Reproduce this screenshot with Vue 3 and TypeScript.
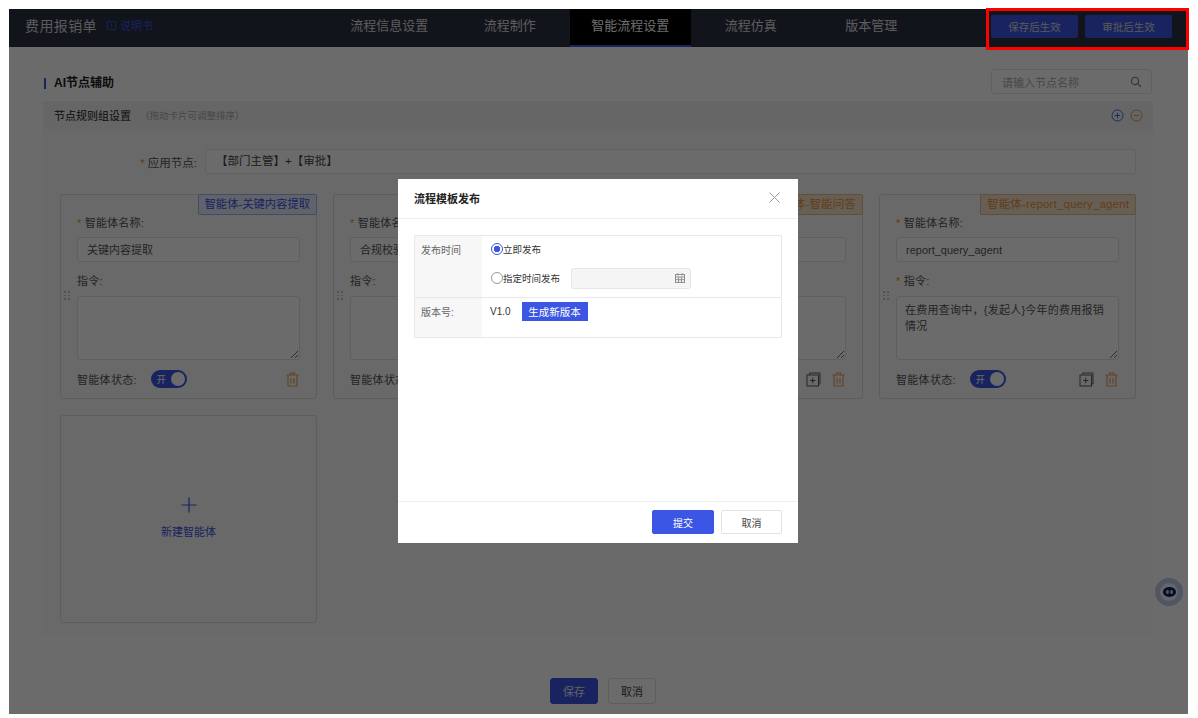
<script setup lang="ts">
type Agent = {
  id: string
  tag: string
  tone: 'blue' | 'orange'
  name: string
  prompt: string
  required: boolean
  copyable: boolean
}

const tabs = ['流程信息设置', '流程制作', '智能流程设置', '流程仿真', '版本管理']
const activeTab = '智能流程设置'

const agents: Agent[] = [
  { id: 'a1', tag: '智能体-关键内容提取', tone: 'blue', name: '关键内容提取', prompt: '', required: false, copyable: false },
  { id: 'a2', tag: '智能体-合规校验', tone: 'blue', name: '合规校验', prompt: '', required: false, copyable: true },
  { id: 'a3', tag: '智能体-智能问答', tone: 'orange', name: '智能问答', prompt: '', required: false, copyable: true },
  {
    id: 'a4',
    tag: '智能体-report_query_agent',
    tone: 'orange',
    name: 'report_query_agent',
    prompt: '在费用查询中，{发起人}今年的费用报销情况',
    required: true,
    copyable: true,
  },
]
</script>

<template>
  <div class="app">
    <header class="topbar">
      <div class="brand">
        <span class="brand-title">费用报销单</span>
        <a class="manual">
          <svg width="11" height="11" viewBox="0 0 12 12" fill="none" stroke="currentColor" stroke-width="1">
            <rect x="1.5" y="1.5" width="9" height="9" rx="1" />
            <path d="M6 3.5v3M6 8v.8" />
          </svg>
          说明书
        </a>
      </div>
      <nav class="tabs">
        <span v-for="tab in tabs" :key="tab" class="tab" :class="{ active: tab === activeTab }">{{ tab }}</span>
      </nav>
      <div class="top-actions">
        <button class="top-btn" type="button">保存后生效</button>
        <button class="top-btn" type="button">审批后生效</button>
      </div>
    </header>

    <main class="main">
      <div class="title-row">
        <h2 class="page-title">AI节点辅助</h2>
        <div class="search">
          <span>请输入节点名称</span>
          <svg width="12" height="12" viewBox="0 0 12 12" fill="none" stroke="#8a8a8a" stroke-width="1.3">
            <circle cx="5" cy="5" r="3.6" />
            <path d="M7.8 7.8l3 3" />
          </svg>
        </div>
      </div>

      <section class="group">
        <div class="group-head">
          <span class="group-title">节点规则组设置</span>
          <span class="group-hint">（拖动卡片可调整排序）</span>
          <span class="group-icons">
            <svg width="13" height="13" viewBox="0 0 13 13" fill="none" stroke="#4a6bdc" stroke-width="1">
              <circle cx="6.5" cy="6.5" r="5.5" />
              <path d="M6.5 3.8v5.4M3.8 6.5h5.4" />
            </svg>
            <svg width="13" height="13" viewBox="0 0 13 13" fill="none" stroke="#d99a5b" stroke-width="1">
              <circle cx="6.5" cy="6.5" r="5.5" />
              <path d="M3.8 6.5h5.4" />
            </svg>
          </span>
        </div>

        <div class="group-body">
          <div class="node-row">
            <label class="node-label"><i class="star">*</i> 应用节点:</label>
            <div class="node-input">【部门主管】+【审批】</div>
          </div>

          <div class="cards">
            <article v-for="agent in agents" :key="agent.id" class="card">
              <span class="tag" :class="agent.tone">{{ agent.tag }}</span>
              <span class="grip"><i v-for="n in 6" :key="n"></i></span>

              <label class="field-label"><i class="star">*</i> 智能体名称:</label>
              <div class="field-input">{{ agent.name }}</div>

              <label class="field-label second"><i v-if="agent.required" class="star">*</i> 指令:</label>
              <textarea class="field-area" :value="agent.prompt" readonly></textarea>

              <div class="card-foot">
                <span class="state-label">智能体状态:</span>
                <span class="switch"><em>开</em><b></b></span>
                <span class="card-icons">
                  <svg v-if="agent.copyable" width="15" height="15" viewBox="0 0 15 15" fill="none" stroke="#5b5b5b" stroke-width="1">
                    <path d="M3.5 2.5v-1.5h10.5v11h-1.5" />
                    <rect x="1" y="3" width="11.5" height="11" />
                    <path d="M6.7 5.8v5.4M4 8.5h5.4" />
                  </svg>
                  <svg width="13" height="15" viewBox="0 0 13 15" fill="none" stroke="#e8a25e" stroke-width="1.2">
                    <path d="M0.5 3h12M4.5 3V1h4v2" />
                    <path d="M2 3v11h9V3" />
                    <path d="M5 6v5.5M8 6v5.5" />
                  </svg>
                </span>
              </div>
            </article>

            <div class="card add-card">
              <svg width="16" height="16" viewBox="0 0 16 16" fill="none" stroke="#3b55e4" stroke-width="1.2">
                <path d="M8 .5v15M.5 8h15" />
              </svg>
              <span>新建智能体</span>
            </div>
          </div>
        </div>
      </section>

      <div class="page-foot">
        <button class="btn primary" type="button">保存</button>
        <button class="btn" type="button">取消</button>
      </div>
    </main>

    <div class="float-eye">
      <span class="eye"><i></i><i></i></span>
    </div>

    <div class="mask"></div>

    <div class="dialog">
      <div class="dialog-head">
        <span>流程模板发布</span>
        <svg width="11" height="11" viewBox="0 0 11 11" fill="none" stroke="#9a9a9a" stroke-width="1">
          <path d="M.5.5l10 10M10.5.5l-10 10" />
        </svg>
      </div>

      <div class="dialog-body">
        <div class="form-table">
          <div class="form-label">发布时间</div>
          <div class="form-cell">
            <div class="radio-row">
              <span class="radio on"></span>
              <span>立即发布</span>
            </div>
            <div class="radio-row">
              <span class="radio"></span>
              <span>指定时间发布</span>
              <span class="date-input">
                <svg width="10" height="10" viewBox="0 0 10 10" fill="none" stroke="#8f8f8f" stroke-width="1">
                  <rect x=".5" y="1.5" width="9" height="8" />
                  <path d="M.5 4h9M3 .2v2.4M7 .2v2.4M3.5 4v5.5M6.5 4v5.5M.5 6.7h9" />
                </svg>
              </span>
            </div>
          </div>
          <div class="form-label second">版本号:</div>
          <div class="form-cell second version">
            <span>V1.0</span>
            <button class="gen-btn" type="button">生成新版本</button>
          </div>
        </div>
      </div>

      <div class="dialog-foot">
        <button class="dlg-btn primary" type="button">提交</button>
        <button class="dlg-btn" type="button">取消</button>
      </div>
    </div>

    <div class="highlight"></div>
  </div>
</template>

<style>
html,
body {
  margin: 0;
  background: #fff;
}
</style>

<style scoped>
.app {
  position: relative;
  box-sizing: border-box;
  display: flex;
  flex-direction: column;
  width: 1179px;
  height: 705px;
  margin: 9px 0 0 9px;
  background: #fff;
  color: #333;
  font-family: "Liberation Sans", "Noto Sans CJK SC", sans-serif;
  font-size: 11px;
  overflow: visible;
}

button {
  font-family: inherit;
  cursor: pointer;
}

.topbar {
  display: flex;
  flex: none;
  align-items: stretch;
  height: 38px;
  background: #2b3042;
}

.brand {
  display: flex;
  flex: none;
  align-items: center;
  gap: 9px;
  box-sizing: border-box;
  width: 320px;
  padding: 0 0 6px 16px;
}

.brand-title {
  color: #d8d8d8;
  font-size: 14px;
  letter-spacing: 0.4px;
}

.manual {
  display: flex;
  align-items: center;
  gap: 3px;
  color: #3b55e4;
  font-size: 11px;
}

.tabs {
  display: flex;
}

.tab {
  display: flex;
  align-items: center;
  justify-content: center;
  box-sizing: border-box;
  width: 120.5px;
  padding-bottom: 8px;
  color: #dcdcdc;
  font-size: 13px;
}

.tab.active {
  padding-bottom: 6px;
  background: #000;
  border-bottom: 2px solid #3b55e4;
  color: #fff;
}

.top-actions {
  display: flex;
  gap: 7px;
  margin-left: auto;
  padding: 6px 16px 0 0;
}

.top-btn {
  width: 87px;
  height: 23px;
  padding: 0;
  border: 0;
  border-radius: 2px;
  background: #3b55e4;
  color: #d6d6d6;
  font-size: 10.5px;
}

.main {
  display: flex;
  flex: 1;
  flex-direction: column;
  padding: 22px 35px 10px 34px;
}

.title-row {
  display: flex;
  align-items: center;
  justify-content: space-between;
  height: 25px;
  margin-bottom: 7px;
}

.page-title {
  margin: 4px 0 0 1px;
  padding-left: 8px;
  border-left: 2px solid #3b55e4;
  color: #222;
  font-size: 12px;
  font-weight: 600;
  line-height: 11px;
}

.search {
  display: flex;
  align-items: center;
  justify-content: space-between;
  box-sizing: border-box;
  width: 161px;
  height: 25px;
  margin-right: 1px;
  padding: 0 9px 0 10px;
  border: 1px solid #e4e4e4;
  border-radius: 3px;
  background: #fff;
  color: #aaa;
}

.group {
  display: flex;
  flex-direction: column;
  box-sizing: border-box;
  height: 534px;
  background: #fafafa;
}

.group-head {
  display: flex;
  align-items: center;
  flex: none;
  height: 28px;
  padding: 0 11px;
  background: #f2f2f2;
}

.group-title {
  color: #444;
  font-size: 11px;
  font-weight: 500;
}

.group-hint {
  margin-left: 9px;
  color: #aaa;
  font-size: 9.5px;
}

.group-icons {
  display: flex;
  gap: 6px;
  margin-left: auto;
  margin-right: -1px;
}

.group-body {
  padding: 20px 17px 0;
}

.node-row {
  display: flex;
  align-items: center;
  height: 25px;
}

.node-label {
  flex: none;
  box-sizing: border-box;
  width: 145px;
  padding-right: 8px;
  color: #555;
  font-size: 11.5px;
  text-align: right;
}

.star {
  color: #e6923f;
  font-style: normal;
}

.node-input {
  flex: 1;
  box-sizing: border-box;
  height: 25px;
  padding: 0 10px;
  border: 1px solid #e6e6e6;
  border-radius: 3px;
  background: #fff;
  color: #444;
  font-size: 11.5px;
  line-height: 23px;
}

.cards {
  display: grid;
  grid-template-columns: repeat(4, 257px);
  grid-template-rows: 205px 208px;
  column-gap: 16px;
  row-gap: 16px;
  margin-top: 20px;
}

.card {
  position: relative;
  box-sizing: border-box;
  padding: 21px 16px 0;
  border: 1px solid #dedede;
  border-radius: 3px;
  background: #fafafa;
}

.tag {
  position: absolute;
  top: -1px;
  right: -1px;
  box-sizing: border-box;
  height: 21px;
  padding: 0 6px;
  border: 1px solid;
  border-radius: 2px;
  font-size: 11.5px;
  line-height: 19px;
}

.tag.blue {
  border-color: #a3b3f0;
  background: #e8edfd;
  color: #3b55e4;
  font-size: 11.3px;
}

.tag.orange {
  border-color: #e6b98d;
  background: #f8e3c9;
  color: #e6923f;
  letter-spacing: 0.15px;
}

.grip {
  position: absolute;
  top: 96px;
  left: 3px;
  display: grid;
  grid-template-columns: repeat(2, 2px);
  gap: 2px 2px;
}

.grip i {
  width: 1.5px;
  height: 1.5px;
  background: #c4c4c4;
}

.field-label {
  display: block;
  color: #555;
  font-size: 11px;
  letter-spacing: 0.2px;
  line-height: 15px;
}

.field-label.second {
  margin-top: 12px;
}

.field-input {
  box-sizing: border-box;
  height: 25px;
  margin-top: 6px;
  padding: 0 9px;
  border: 1px solid #e2e2e2;
  border-radius: 3px;
  background: #fff;
  color: #555;
  font-size: 11px;
  line-height: 24px;
  white-space: nowrap;
  overflow: hidden;
}

.field-area {
  display: block;
  box-sizing: border-box;
  width: 100%;
  height: 64px;
  margin-top: 7px;
  padding: 5px 8px;
  border: 1px solid #e2e2e2;
  border-radius: 3px;
  background: #fff;
  color: #555;
  font-family: inherit;
  font-size: 11px;
  letter-spacing: 0.25px;
  line-height: 16px;
  outline: none;
}

.card-foot {
  display: flex;
  align-items: center;
  height: 20px;
  margin-top: 9px;
}

.state-label {
  color: #555;
  font-size: 11px;
  letter-spacing: 0.3px;
}

.switch {
  display: flex;
  align-items: center;
  justify-content: space-between;
  box-sizing: border-box;
  width: 36px;
  height: 18px;
  margin-left: 14px;
  padding: 0 2px 0 6px;
  border-radius: 9px;
  background: #3b55e4;
}

.switch em {
  color: #fff;
  font-size: 9px;
  font-style: normal;
}

.switch b {
  width: 14px;
  height: 14px;
  border-radius: 50%;
  background: #fff;
}

.card-icons {
  display: flex;
  align-items: center;
  gap: 11px;
  margin-left: auto;
  margin-right: 1px;
}

.add-card {
  display: flex;
  flex-direction: column;
  align-items: center;
  justify-content: center;
  gap: 12px;
  padding: 0 0 2px;
  color: #3b55e4;
  font-size: 11px;
}

.add-card span {
  line-height: 14px;
}

.page-foot {
  display: flex;
  justify-content: center;
  gap: 10px;
  margin-top: auto;
  padding-left: 10px;
}

.btn {
  width: 48px;
  height: 26px;
  padding: 0;
  border: 1px solid #ddd;
  border-radius: 3px;
  background: #fff;
  color: #444;
  font-size: 11px;
}

.btn.primary {
  border-color: #3b55e4;
  background: #3b55e4;
  color: #e8e8e8;
}

.float-eye {
  position: absolute;
  top: 569px;
  left: 1146px;
  display: flex;
  align-items: center;
  justify-content: center;
  box-sizing: border-box;
  width: 28px;
  height: 28px;
  border: 5px solid #c2cdf4;
  border-radius: 50%;
  background: #f2f2f2;
}

.eye {
  display: flex;
  align-items: center;
  justify-content: center;
  gap: 1px;
  width: 13px;
  height: 10px;
  border-radius: 50%;
  background: #0f1c6e;
}

.eye i {
  width: 3px;
  height: 4px;
  border-radius: 50%;
  background: #cfd4e6;
}

.mask {
  position: absolute;
  inset: 0;
  background: rgba(0, 0, 0, 0.58);
}

.dialog {
  position: absolute;
  top: 170px;
  left: 389px;
  display: flex;
  flex-direction: column;
  box-sizing: border-box;
  width: 400px;
  height: 364px;
  background: #fff;
}

.dialog-head {
  display: flex;
  align-items: center;
  justify-content: space-between;
  flex: none;
  box-sizing: border-box;
  height: 40px;
  padding: 0 18px 2px 16px;
  border-bottom: 1px solid #f0f0f0;
  color: #222;
  font-size: 11px;
  font-weight: 600;
}

.dialog-body {
  flex: 1;
  padding: 16px 16px 0;
}

.form-table {
  display: grid;
  grid-template-columns: 67px 1fr;
  grid-template-rows: 61px 40px;
  border: 1px solid #e8e8e8;
  border-radius: 1px;
}

.form-label {
  padding: 8px 0 0 6px;
  background: #f7f7f7;
  color: #666;
  font-size: 10px;
  line-height: 14px;
}

.form-cell {
  padding: 6px 0 0 9px;
  color: #333;
  font-size: 9.5px;
}

.form-label.second,
.form-cell.second {
  border-top: 1px solid #e8e8e8;
}

.radio-row {
  display: flex;
  align-items: center;
  height: 14px;
}

.radio-row + .radio-row {
  margin-top: 15px;
}

.radio {
  box-sizing: border-box;
  width: 12px;
  height: 12px;
  border: 1px solid #999;
  border-radius: 50%;
  background: #fff;
}

.radio.on {
  border-color: #3b55e4;
  background: radial-gradient(circle, #3b55e4 0 3px, #fff 3.5px);
}

.date-input {
  display: flex;
  align-items: center;
  justify-content: flex-end;
  box-sizing: border-box;
  width: 120px;
  height: 21px;
  margin-left: 11px;
  padding-right: 5px;
  border: 1px solid #e6e6e6;
  border-radius: 3px;
  background: #f5f5f5;
}

.version {
  display: flex;
  align-items: flex-start;
  gap: 11px;
  padding: 4px 0 0 8px;
  font-size: 10px;
}

.version > span {
  line-height: 20px;
}

.gen-btn {
  width: 66px;
  height: 19px;
  padding: 0;
  border: 0;
  background: #3b55e4;
  color: #fff;
  font-size: 10.5px;
}

.dialog-foot {
  display: flex;
  justify-content: flex-end;
  flex: none;
  gap: 7px;
  height: 42px;
  box-sizing: border-box;
  padding: 8px 16px 0;
  border-top: 1px solid #f0f0f0;
}

.dlg-btn {
  width: 61px;
  height: 24px;
  padding: 0;
  border: 1px solid #e3e3e3;
  border-radius: 2px;
  background: #fff;
  color: #444;
  font-size: 10px;
}

.dlg-btn.primary {
  width: 62px;
  border-color: #3b55e4;
  background: #3b55e4;
  color: #fff;
}

.highlight {
  position: absolute;
  top: -1px;
  left: 977px;
  box-sizing: border-box;
  width: 203px;
  height: 42px;
  border: 3px solid #f00;
}
</style>
